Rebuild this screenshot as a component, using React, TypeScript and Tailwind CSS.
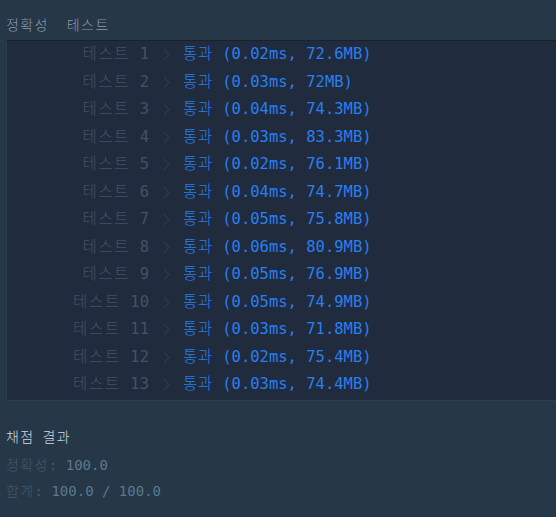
import React from "react";

const rows: [number, string, string][] = [
  [1, "0.02ms", "72.6MB"],
  [2, "0.03ms", "72MB"],
  [3, "0.04ms", "74.3MB"],
  [4, "0.03ms", "83.3MB"],
  [5, "0.02ms", "76.1MB"],
  [6, "0.04ms", "74.7MB"],
  [7, "0.05ms", "75.8MB"],
  [8, "0.06ms", "80.9MB"],
  [9, "0.05ms", "76.9MB"],
  [10, "0.05ms", "74.9MB"],
  [11, "0.03ms", "71.8MB"],
  [12, "0.02ms", "75.4MB"],
  [13, "0.03ms", "74.4MB"],
];

const mono = { fontFamily: '"DejaVu Sans Mono", "Noto Sans CJK KR", monospace' };

export default function App() {
  return (
    <div
      className="w-[556px] h-[517px] bg-[#263747] pl-[6px] overflow-hidden"
      style={mono}
    >
      <div className="pt-[15px] h-[40px] text-[14px] leading-[20px] text-[#8a9aa9] whitespace-pre font-light">
        <span className="tracking-[1.4px]">정확성</span>
        <span className="ml-[18px] tracking-[1.4px]">테스트</span>
      </div>
      <div className="w-[560px] bg-[#202b3d] border-t border-t-[#18222f] border-l border-l-[#2c3b4d] border-b border-b-[#2e3e50] pb-px">
        {rows.map(([n, t, m]) => (
          <div key={n} className="flex items-center h-[27.5px] text-[15.5px]">
            <div className="w-[142px] text-right text-[#415367] whitespace-pre">
              <span className="tracking-[1.7px] font-light">테스트</span>
              {` ${n}`}
            </div>
            <div className="w-[34px] flex justify-center">
              <svg width="7" height="13" viewBox="0 0 7 13" fill="none">
                <path d="M1 1l5 5.5L1 12" stroke="#2c3b4f" strokeWidth="1.2" />
              </svg>
            </div>
            <div className="text-[#2a7ff0] whitespace-pre">
              <span className="tracking-[0.7px] font-light">통과</span>
              {` (${t}, ${m})`}
            </div>
          </div>
        ))}
      </div>
      <div className="mt-[26px] text-[14px] leading-[20px] text-[#d2dae2] whitespace-pre font-light">
        <span className="tracking-[1.4px]">채점</span>
        <span className="ml-[8px] tracking-[1.4px]">결과</span>
      </div>
      <div className="mt-[8px] text-[14px] leading-[20px] whitespace-pre">
        <span className="text-[#44596b]">
          <span className="tracking-[1.4px] font-light">정확성</span>:{" "}
        </span>
        <span className="text-[#5a7a93]">100.0</span>
      </div>
      <div className="mt-[6px] text-[14px] leading-[20px] whitespace-pre">
        <span className="text-[#44596b]">
          <span className="tracking-[1.4px] font-light">합계</span>:{" "}
        </span>
        <span className="text-[#5a7a93]">100.0 / 100.0</span>
      </div>
    </div>
  );
}
